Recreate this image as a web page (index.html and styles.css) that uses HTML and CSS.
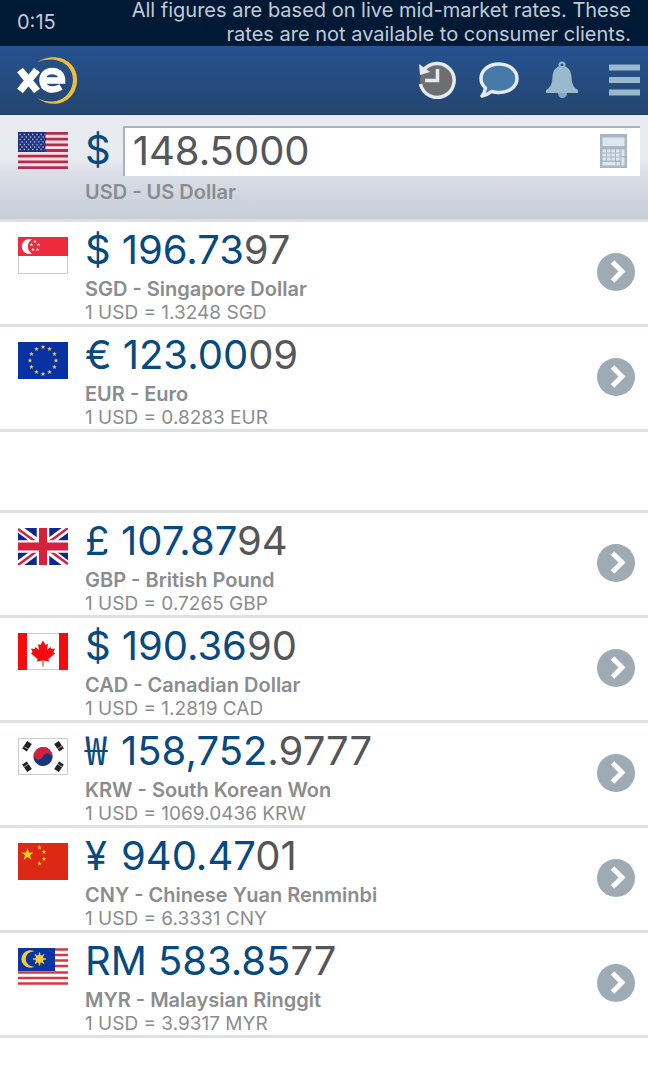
FILE: index.html
```html
<!DOCTYPE html>
<html lang="en">
<head>
    <meta charset="UTF-8">
    <meta name="viewport" content="width=device-width, initial-scale=1.0">
    <title>XE Currency</title>
    <link rel="stylesheet" href="styles.css">
</head>
<body>

    <!-- shared shapes -->
    <svg class="defs" aria-hidden="true">
        <symbol id="star" viewBox="-10 -10 20 20">
            <path d="M0-10 2.4-3.1 9.5-3.1 3.8 1.2 5.9 8.1 0 4 -5.9 8.1 -3.8 1.2 -9.5-3.1 -2.4-3.1z"/>
        </symbol>
        <symbol id="chevron" viewBox="0 0 38 38">
            <circle cx="19" cy="19" r="19" fill="#9eabb5"/>
            <path d="M15.500 9 25 18.500 15.500 28" fill="none" stroke="#fff" stroke-width="5"/>
        </symbol>
    </svg>

    <div class="status">
        <span class="clock">0:15</span>
        <p class="notice">All figures are based on live mid-market rates. These rates are not available to consumer clients.</p>
    </div>

    <header class="toolbar">
        <a class="logo" href="#" aria-label="xe">
            <svg width="62" height="52" viewBox="0 0 62 52">
                <path d="M21 8C39-3 62 6 61 27 60 47 39 57 21 44 39 53 56 44 57 26 57 9 39 1 21 8z" fill="#efbd3c"/>
                <path d="M4 16 21 37M21 16 4 37" fill="none" stroke="#fff" stroke-width="7.500"/>
                <path d="M28 26.500H46C46 20.500 42 17 36 17 30 17 26.500 21 26.500 26.500 26.500 35 36 38 45 33" fill="none" stroke="#fff" stroke-width="6.500"/>
            </svg>
        </a>
        <nav class="tools">
            <button class="tool" aria-label="History">
                <svg width="38" height="38" viewBox="0 0 38 38">
                    <circle cx="19" cy="19" r="17" fill="#6d6e70"/>
                    <path d="M5 10A17 17 0 1 1 2.500 23" fill="none" stroke="#e6ebf3" stroke-width="3.500"/>
                    <path d="M1 3 2 14 12 11z" fill="#e6ebf3"/>
                    <path d="M19.500 8V19.500H7" fill="none" stroke="#e6ebf3" stroke-width="3.500"/>
                </svg>
            </button>
            <button class="tool" aria-label="Messages">
                <svg width="40" height="38" viewBox="0 0 40 38">
                    <path d="M20 3C30 3 38 9 38 17.500S30 31.500 20 31.500C17 31.500 14.500 31 12.500 30.500 9.500 33 6 34.500 3 35 5 32.500 6 29.500 6.500 27 3.500 24.500 2 21 2 17.500 2 9 10 3 20 3z" fill="#4679a8" stroke="#e6ebf3" stroke-width="3.500" stroke-linejoin="round"/>
                </svg>
            </button>
            <button class="tool" aria-label="Alerts">
                <svg width="32" height="38" viewBox="0 0 32 38">
                    <path d="M12 32H21C21 35 19 37 16.500 37S12 35 12 32z" fill="#84a9c3"/>
                    <circle cx="16" cy="4" r="2.500" fill="none" stroke="#9bb9cd" stroke-width="2"/>
                    <path d="M16 5C22 5 25 9 25.500 16 26 24 28 27 32 29V32H0V29C4 27 6 24 6.500 16 7 9 10 5 16 5z" fill="#9bb9cd"/>
                </svg>
            </button>
            <button class="tool" aria-label="Menu">
                <svg width="31" height="38" viewBox="0 0 31 38">
                    <path d="M0 6.500H31M0 19H31M0 31.500H31" stroke="#9bb9cd" stroke-width="6"/>
                </svg>
            </button>
        </nav>
    </header>

    <section class="base">
        <svg class="flag" viewBox="0 0 50 37">
            <path fill="#f6dfe6" d="M0 0H50V37H0z"/>
            <path d="M0 1.400H50M0 7.100H50M0 12.800H50M0 18.500H50M0 24.200H50M0 29.900H50M0 35.600H50" stroke="#b52b4c" stroke-width="2.800"/>
            <path fill="#22317c" d="M0 0H27.500V20H0z"/>
            <path d="M1.500 2.500H27M3.500 5H27M1.500 7.500H27M3.500 10H27M1.500 12.500H27M3.500 15H27M1.500 17.500H27" stroke="#a9bfdd" stroke-width="1.300" stroke-dasharray="1.300 2.900"/>
        </svg>
        <label class="symbol" for="amount">$</label>
        <div class="entry">
            <input type="text" id="amount" value="148.5000" inputmode="decimal">
            <button class="calc" aria-label="Calculator">
                <svg width="27" height="34" viewBox="0 0 27 34">
                    <path fill="#a9b7c3" d="M0 0H27V34H0z"/>
                    <path fill="#dbe6f0" d="M2.500 3.500H24.500V12H2.500z"/>
                    <path d="M2.500 17H21M2.500 21H21M2.500 25H21" stroke="#dbe6f0" stroke-width="3" stroke-dasharray="3.500 1"/>
                    <path fill="#dbe6f0" d="M2.500 28H15.500V31.500H2.500zM16.500 28H20V31.500H16.500zM21.500 15.500H24.500V22H21.500zM21.500 23.500H24.500V31.500H21.500z"/>
                </svg>
            </button>
        </div>
        <p class="name">USD - US Dollar</p>
    </section>

    <ul class="rates">
        <li class="rate">
            <svg class="flag" viewBox="0 0 50 37">
                <path fill="#fff" stroke="#ccc" d="M.5 .5H49.500V36.500H.5z"/>
                <path fill="#ee2b3c" d="M0 0H50V19H0z"/>
                <path fill="#fff" d="M14 2.500A7.500 7.500 0 1 0 14 16.500 8 8 0 0 1 14 2.500z"/>
                <g fill="#fff">
                    <use href="#star" x="15" y="2.500" width="4" height="4"/>
                    <use href="#star" x="11.500" y="5.500" width="4" height="4"/>
                    <use href="#star" x="18.500" y="5.500" width="4" height="4"/>
                    <use href="#star" x="13" y="10.500" width="4" height="4"/>
                    <use href="#star" x="17.500" y="10.500" width="4" height="4"/>
                </g>
            </svg>
            <div class="info">
                <p class="amount"><span class="symbol">$</span>196.73<span class="minor">97</span></p>
                <p class="name">SGD - Singapore Dollar</p>
                <p class="unit">1 USD = 1.3248 SGD</p>
            </div>
            <a class="more" href="#" aria-label="SGD details"><svg width="38" height="38"><use href="#chevron"/></svg></a>
        </li>
        <li class="rate">
            <svg class="flag" viewBox="0 0 50 37">
                <path fill="#0832a2" d="M0 0H50V37H0z"/>
                <g fill="#e5d55a">
                    <use href="#star" x="22.500" y="2.500" width="5" height="5"/>
                    <use href="#star" x="29" y="4.500" width="5" height="5"/>
                    <use href="#star" x="34" y="9.500" width="5" height="5"/>
                    <use href="#star" x="35.500" y="16" width="5" height="5"/>
                    <use href="#star" x="34" y="22.500" width="5" height="5"/>
                    <use href="#star" x="29" y="27.500" width="5" height="5"/>
                    <use href="#star" x="22.500" y="29.500" width="5" height="5"/>
                    <use href="#star" x="16" y="27.500" width="5" height="5"/>
                    <use href="#star" x="11" y="22.500" width="5" height="5"/>
                    <use href="#star" x="9.500" y="16" width="5" height="5"/>
                    <use href="#star" x="11" y="9.500" width="5" height="5"/>
                    <use href="#star" x="16" y="4.500" width="5" height="5"/>
                </g>
            </svg>
            <div class="info">
                <p class="amount"><span class="symbol">€</span>123.00<span class="minor">09</span></p>
                <p class="name">EUR - Euro</p>
                <p class="unit">1 USD = 0.8283 EUR</p>
            </div>
            <a class="more" href="#" aria-label="EUR details"><svg width="38" height="38"><use href="#chevron"/></svg></a>
        </li>
    </ul>

    <div class="spacer"></div>

    <ul class="rates">
        <li class="rate">
            <svg class="flag" viewBox="0 0 50 37">
                <path fill="#10278b" d="M0 0H50V37H0z"/>
                <path d="M0 0 50 37M50 0 0 37" stroke="#fff" stroke-width="7.500"/>
                <path d="M0 1 18 14M50 0 31 14M0 37 19 23M50 36 32 23" stroke="#d5213e" stroke-width="2.500"/>
                <path d="M25 0V37M0 18.500H50" stroke="#fff" stroke-width="12.500"/>
                <path d="M25 0V37M0 18.500H50" stroke="#d5213e" stroke-width="8"/>
            </svg>
            <div class="info">
                <p class="amount"><span class="symbol">£</span>107.87<span class="minor">94</span></p>
                <p class="name">GBP - British Pound</p>
                <p class="unit">1 USD = 0.7265 GBP</p>
            </div>
            <a class="more" href="#" aria-label="GBP details"><svg width="38" height="38"><use href="#chevron"/></svg></a>
        </li>
        <li class="rate">
            <svg class="flag" viewBox="0 0 50 37">
                <path fill="#fff" stroke="#ccc" d="M.5 .5H49.500V36.500H.5z"/>
                <path fill="#f50a0e" d="M0 0H9V37H0zM41 0H50V37H41z"/>
                <path fill="#f50a0e" d="M25 7.500 27.500 12 30 11 29 17 32.500 14 33.500 16 37 15.500 35.500 19 37 20.500 30.500 26 31 28.500 25.500 27.500V33.500H24.500V27.500L19 28.500 19.500 26 13 20.500 14.500 19 13 15.500 16.500 16 17.500 14 21 17 20 11 22.500 12z"/>
            </svg>
            <div class="info">
                <p class="amount"><span class="symbol">$</span>190.36<span class="minor">90</span></p>
                <p class="name">CAD - Canadian Dollar</p>
                <p class="unit">1 USD = 1.2819 CAD</p>
            </div>
            <a class="more" href="#" aria-label="CAD details"><svg width="38" height="38"><use href="#chevron"/></svg></a>
        </li>
        <li class="rate">
            <svg class="flag" viewBox="0 0 50 37">
                <path fill="#fff" stroke="#ccc" d="M.5 .5H49.500V36.500H.5z"/>
                <g transform="rotate(20 25 18.500)">
                    <circle cx="25" cy="18.500" r="9.500" fill="#15367d"/>
                    <path fill="#d2213f" d="M15.500 18.500A9.500 9.500 0 0 1 34.500 18.500 4.750 4.750 0 0 0 25 18.500 4.750 4.750 0 0 1 15.500 18.500z"/>
                </g>
                <g stroke="#222" stroke-width="2">
                    <path d="M5 11 10 3.500M8 13 13 5.500M6.500 12 11.500 4.500"/>
                    <path d="M37 5.500 42 13M40 3.500 45 11M38.500 4.500 43.500 12"/>
                    <path d="M5 26 10 33.500M8 24 13 31.500M6.500 25 11.500 32.500"/>
                    <path d="M37 31.500 42 24M40 33.500 45 26M38.500 32.500 43.500 25"/>
                </g>
                <path d="M6.500 9 12 12M38 12 44 8M6 29 12 25M38 25 44 29" stroke="#fff" stroke-width=".6"/>
            </svg>
            <div class="info">
                <p class="amount"><span class="symbol won">₩</span>158,752<span class="minor">.9777</span></p>
                <p class="name">KRW - South Korean Won</p>
                <p class="unit">1 USD = 1069.0436 KRW</p>
            </div>
            <a class="more" href="#" aria-label="KRW details"><svg width="38" height="38"><use href="#chevron"/></svg></a>
        </li>
        <li class="rate">
            <svg class="flag" viewBox="0 0 50 37">
                <path fill="#dc2814" d="M0 0H50V37H0z"/>
                <g fill="#fbd116">
                    <use href="#star" x="3" y="5" width="13" height="13"/>
                    <use href="#star" x="19" y="2" width="5" height="5"/>
                    <use href="#star" x="23.500" y="6.500" width="5" height="5"/>
                    <use href="#star" x="23.500" y="13.500" width="5" height="5"/>
                    <use href="#star" x="19" y="18" width="5" height="5"/>
                </g>
            </svg>
            <div class="info">
                <p class="amount"><span class="symbol">¥</span>940.47<span class="minor">01</span></p>
                <p class="name">CNY - Chinese Yuan Renminbi</p>
                <p class="unit">1 USD = 6.3331 CNY</p>
            </div>
            <a class="more" href="#" aria-label="CNY details"><svg width="38" height="38"><use href="#chevron"/></svg></a>
        </li>
        <li class="rate">
            <svg class="flag" viewBox="0 0 50 37">
                <path fill="#fff" d="M0 0H50V37H0z"/>
                <path d="M0 1.500H50M0 7H50M0 12.500H50M0 18H50M0 24.500H50M0 30H50M0 35.500H50" stroke="#d63840" stroke-width="2.600"/>
                <path fill="#0b35a0" d="M0 0H37V23H0z"/>
                <path fill="#f5ca3c" d="M16.500 3.500A8.700 8.700 0 1 0 16.500 18.500 7.600 7.600 0 1 1 16.500 3.500z"/>
                <circle cx="21.500" cy="11" r="4" fill="#f5ca3c"/>
                <path d="M21.500 4.500V17.500M15 11H28M17 6.500 26 15.500M26 6.500 17 15.500" stroke="#f5ca3c" stroke-width="1.500"/>
            </svg>
            <div class="info">
                <p class="amount"><span class="symbol">RM</span>583.85<span class="minor">77</span></p>
                <p class="name">MYR - Malaysian Ringgit</p>
                <p class="unit">1 USD = 3.9317 MYR</p>
            </div>
            <a class="more" href="#" aria-label="MYR details"><svg width="38" height="38"><use href="#chevron"/></svg></a>
        </li>
    </ul>

</body>
</html>
```

FILE: styles.css
```css
* {
    box-sizing: border-box;
}

body {
    margin: 0;
    font-family: Inter, "Liberation Sans", sans-serif;
    background: #fff;
    color: #54565a;
}

p, ul {
    margin: 0;
    padding: 0;
}

button {
    border: none;
    padding: 0;
    background: none;
    cursor: pointer;
}

svg {
    display: block;
}

.defs {
    display: none;
}

.status {
    display: flex;
    justify-content: space-between;
    align-items: flex-end;
    height: 46px;
    padding: 0 17px;
    background: #001a35;
    color: #c3cad6;
    font-size: 20px;
    line-height: 24px;
}

.clock {
    padding-bottom: 12px;
}

.notice {
    width: 510px;
    text-align: right;
}

.toolbar {
    display: flex;
    justify-content: space-between;
    align-items: center;
    height: 69px;
    padding: 0 8px 0 16px;
    background: linear-gradient(#265290, #24466f);
    border-bottom: 1px solid #1d3a5f;
}

.tools {
    display: flex;
    align-items: center;
}

.tool {
    margin-left: 23px;
}

.tool:nth-child(3) {
    margin-left: 27px;
}

.tool:last-child {
    margin-left: 31px;
}

.base {
    display: grid;
    grid-template-columns: 50px auto minmax(0, 1fr);
    column-gap: 17px;
    padding: 11px 8px 7px 18px;
    background: linear-gradient(#e9ebf0, #e6eaee 45%, #dbdee7 55%, #c5ced7);
    border-bottom: 3px solid #dcdfe4;
}

.flag {
    width: 50px;
    height: 37px;
    margin-top: 15px;
}

.base .flag {
    margin-top: 6px;
}

.symbol {
    display: inline-block;
    min-width: 25px;
    margin-right: 11px;
    color: #064a80;
}

.base .symbol {
    margin-right: -5px;
    font-size: 40px;
    line-height: 48px;
}

/* Inter draws the won sign too wide */
.won {
    font-family: "Noto Sans CJK KR", sans-serif;
    line-height: 1;
}

.entry {
    display: flex;
    align-items: center;
    height: 50px;
    padding: 0 13px 3px 8px;
    background: #fff;
    border-top: 2px solid #a9b4ba;
    border-left: 2px solid #a9b4ba;
}

.entry input {
    flex: 1;
    min-width: 0;
    padding: 0;
    border: none;
    outline: none;
    background: none;
    color: #54565a;
    font-family: inherit;
    font-size: 40px;
}

.base .name {
    grid-column: 2 / 4;
    padding-top: 4px;
    height: 36px;
}

.rates {
    list-style: none;
}

.rate {
    display: flex;
    align-items: flex-start;
    padding: 0 13px 0 18px;
    border-bottom: 3px solid #dfe0e4;
}

.info {
    flex: 1;
    padding: 1px 0 0 17px;
}

.amount {
    font-size: 40px;
    line-height: 54px;
    color: #064a80;
}

.minor {
    color: #54565a;
}

.name {
    font-size: 20px;
    font-weight: 600;
    line-height: 24px;
    color: #8b8c8f;
}

.unit {
    font-size: 19px;
    line-height: 23px;
    color: #8b8c8f;
}

.more {
    align-self: center;
    margin-bottom: 3px;
}

.spacer {
    height: 81px;
    border-bottom: 3px solid #dfe0e4;
}
```
